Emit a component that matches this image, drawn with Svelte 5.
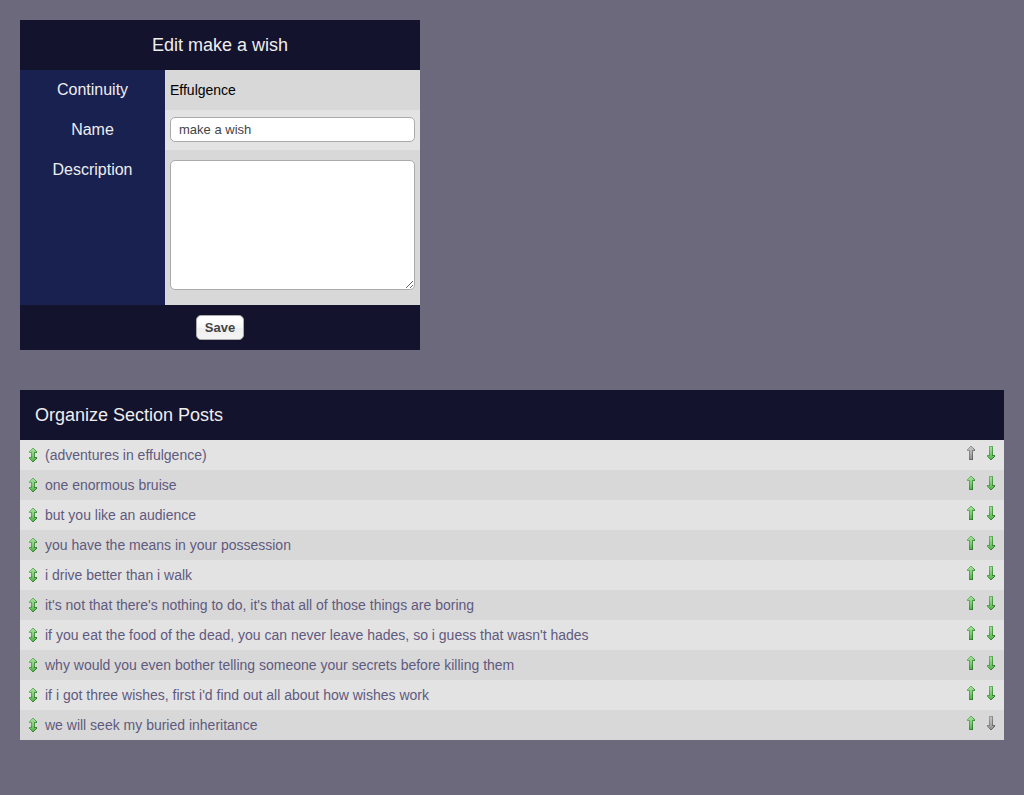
<script>
  let name = $state('make a wish');
  let description = $state('');
  let posts = $state([
    '(adventures in effulgence)',
    'one enormous bruise',
    'but you like an audience',
    'you have the means in your possession',
    'i drive better than i walk',
    "it's not that there's nothing to do, it's that all of those things are boring",
    "if you eat the food of the dead, you can never leave hades, so i guess that wasn't hades",
    'why would you even bother telling someone your secrets before killing them',
    "if i got three wishes, first i'd find out all about how wishes work",
    'we will seek my buried inheritance'
  ]);

  // Each arrow is an outer silhouette (edge) with a lighter core on top.
  const shapes = {
    both: {
      edge: 'M3 0h2v1h1v1h1v1h1v2H6v4h2v2H7v1H6v1H5v1H3v-1H2v-1H1v-1H0V9h2V5H0V3h1V2h1V1h1z',
      core: 'M3 1h2v1h1v1h1v1H5v6h2v1H6v1H5v1H3v-1H2v-1H1v-1h2V4H1V3h1V2h1z'
    },
    up: {
      edge: 'M3 0h2v1h1v1h1v1h1v2H6v9H2V5H0V3h1V2h1V1h1z',
      core: 'M3 1h2v1h1v1h1v1H5v9H3V4H1V3h1V2h1z'
    },
    down: {
      edge: 'M2 0h4v9h2v2H7v1H6v1H5v1H3v-1H2v-1H1v-1H0V9h2z',
      core: 'M3 1h2v9h2v1H6v1H5v1H3v-1H2v-1H1v-1h2z'
    }
  };

  function move(from, to) {
    if (to < 0 || to >= posts.length) return;
    const next = [...posts];
    [next[from], next[to]] = [next[to], next[from]];
    posts = next;
  }
</script>

<svg class="defs" width="0" height="0" aria-hidden="true">
  <defs>
    <linearGradient id="green" x1="0" y1="0" x2="0" y2="1">
      <stop offset="0" stop-color="#a5dc9c" />
      <stop offset="0.5" stop-color="#84cb7c" />
      <stop offset="1" stop-color="#55b44e" />
    </linearGradient>
    <linearGradient id="green-edge" x1="0" y1="0" x2="1" y2="1">
      <stop offset="0" stop-color="#84c67d" />
      <stop offset="0.45" stop-color="#4fa34a" />
      <stop offset="1" stop-color="#226a20" />
    </linearGradient>
    <linearGradient id="grey" x1="0" y1="0" x2="0" y2="1">
      <stop offset="0" stop-color="#c2c2c2" />
      <stop offset="0.5" stop-color="#b0b0b0" />
      <stop offset="1" stop-color="#929292" />
    </linearGradient>
    <linearGradient id="grey-edge" x1="0" y1="0" x2="1" y2="1">
      <stop offset="0" stop-color="#acacac" />
      <stop offset="0.45" stop-color="#858585" />
      <stop offset="1" stop-color="#505050" />
    </linearGradient>
  </defs>
</svg>

{#snippet arrow(shape, tone)}
  <svg width="8" height="14" viewBox="0 0 8 14" shape-rendering="crispEdges" aria-hidden="true">
    <path d={shape.edge} fill="url(#{tone}-edge)" />
    <path d={shape.core} fill="url(#{tone})" />
  </svg>
{/snippet}

<main>
  <form onsubmit={(e) => e.preventDefault()}>
    <table class="editor">
      <thead>
        <tr><th class="title" colspan="2">Edit make a wish</th></tr>
      </thead>
      <tbody>
        <tr>
          <th class="label" scope="row">Continuity</th>
          <td class="even">Effulgence</td>
        </tr>
        <tr>
          <th class="label" scope="row"><label for="name">Name</label></th>
          <td class="odd field"><input id="name" type="text" bind:value={name} /></td>
        </tr>
        <tr>
          <th class="label" scope="row"><label for="description">Description</label></th>
          <td class="even area"><textarea id="description" bind:value={description}></textarea></td>
        </tr>
      </tbody>
      <tfoot>
        <tr><td class="footer" colspan="2"><button class="save" type="submit">Save</button></td></tr>
      </tfoot>
    </table>
  </form>

  <section>
    <h2>Organize Section Posts</h2>
    <ul>
      {#each posts as post, i (post)}
        <li>
          <span class="handle">
            {@render arrow(shapes.both, 'green')}
          </span>
          <a href="#post-{i + 1}">{post}</a>
          <button
            class="move"
            type="button"
            aria-label="Move up"
            disabled={i === 0}
            onclick={() => move(i, i - 1)}
          >
            {@render arrow(shapes.up, i === 0 ? 'grey' : 'green')}
          </button>
          <button
            class="move"
            type="button"
            aria-label="Move down"
            disabled={i === posts.length - 1}
            onclick={() => move(i, i + 1)}
          >
            {@render arrow(shapes.down, i === posts.length - 1 ? 'grey' : 'green')}
          </button>
        </li>
      {/each}
    </ul>
  </section>
</main>

<style>
  :global(body) {
    margin: 0;
    background: #6d697d;
  }

  .defs {
    position: absolute;
  }

  main {
    padding: 20px;
    color: #000;
    font-family: 'Liberation Sans', Arial, sans-serif;
    font-size: 14px;
    text-rendering: optimizeSpeed;
  }

  .editor {
    width: 400px;
    max-width: 100%;
    border-collapse: collapse;
    table-layout: auto;
  }

  th,
  td {
    padding: 0 5px;
  }

  .title {
    height: 50px;
    background: #14132d;
    color: #eee;
    font-size: 18px;
    font-weight: normal;
  }

  .label {
    box-sizing: border-box;
    width: 145px;
    padding: 10px;
    background: #192151;
    color: #eee;
    font-size: 16px;
    font-weight: normal;
    line-height: 20px;
    vertical-align: top;
  }

  .odd {
    background: #e3e3e3;
  }

  .even {
    background: #d8d8d8;
  }

  .field {
    padding: 7px 5px 8px;
  }

  .area {
    padding: 10px 5px 15px;
  }

  input,
  textarea {
    display: block;
    box-sizing: border-box;
    width: 100%;
    border: 1px solid #aaa;
    border-radius: 5px;
    background: #fff;
    color: #444;
    font-family: inherit;
    font-size: 13px;
  }

  input {
    height: 25px;
    padding: 0 8px;
  }

  textarea {
    height: 130px;
    padding: 5px 8px;
    resize: both;
  }

  .footer {
    height: 45px;
    background: #14132d;
    text-align: center;
  }

  .save {
    height: 25px;
    padding: 0 8px;
    border: 1px solid #aaa;
    border-radius: 5px;
    background: linear-gradient(#fff 20%, #f6f6f6 50%, #eee 52%, #f4f4f4 100%);
    color: #444;
    font-family: inherit;
    font-size: 13px;
    font-weight: bold;
    vertical-align: middle;
  }

  section {
    margin-top: 40px;
  }

  h2 {
    margin: 0;
    padding: 0 15px;
    background: #14132d;
    color: #eee;
    font-size: 18px;
    font-weight: normal;
    line-height: 50px;
  }

  ul {
    margin: 0;
    padding: 0;
    list-style: none;
  }

  li {
    display: flex;
    min-height: 30px;
    padding: 0 9px;
    background: #e3e3e3;
  }

  li:nth-child(even) {
    background: #d8d8d8;
  }

  svg {
    display: block;
  }

  .handle {
    padding: 8px 8px 8px 0;
    cursor: move;
  }

  a {
    flex: 1;
    color: #5f5a7f;
    line-height: 30px;
    text-decoration: none;
  }

  .move {
    align-self: flex-start;
    margin-left: 12px;
    padding: 6px 0;
    border: 0;
    background: none;
    cursor: pointer;
  }

  .move:disabled {
    cursor: default;
  }
</style>
